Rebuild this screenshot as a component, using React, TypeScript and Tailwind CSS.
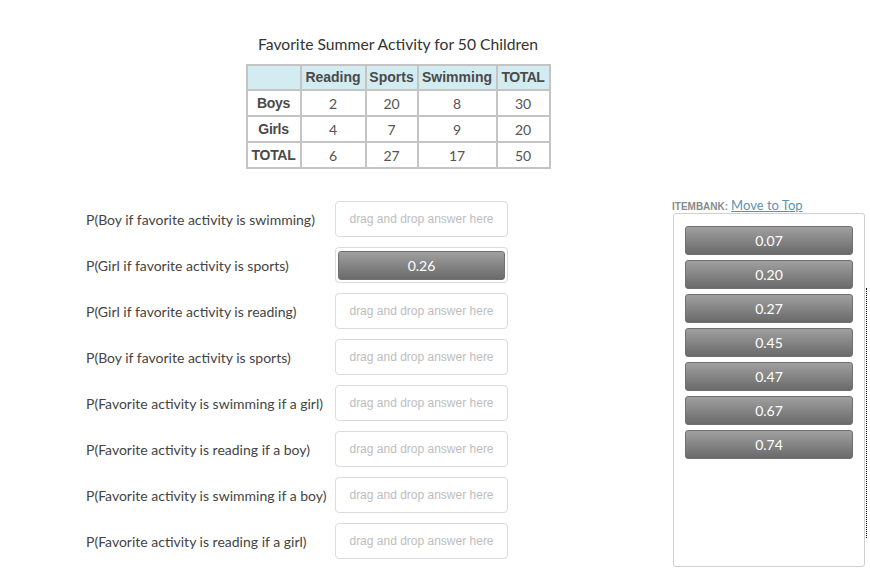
import React from 'react';

const rows = [
  { label: 'Boys', values: ['2', '20', '8', '30'] },
  { label: 'Girls', values: ['4', '7', '9', '20'] },
  { label: 'TOTAL', values: ['6', '27', '17', '50'] },
];

const questions = [
  { text: 'P(Boy if favorite activity is swimming)', answer: null },
  { text: 'P(Girl if favorite activity is sports)', answer: '0.26' },
  { text: 'P(Girl if favorite activity is reading)', answer: null },
  { text: 'P(Boy if favorite activity is sports)', answer: null },
  { text: 'P(Favorite activity is swimming if a girl)', answer: null },
  { text: 'P(Favorite activity is reading if a boy)', answer: null },
  { text: 'P(Favorite activity is swimming if a boy)', answer: null },
  { text: 'P(Favorite activity is reading if a girl)', answer: null },
];

const bank = ['0.07', '0.20', '0.27', '0.45', '0.47', '0.67', '0.74'];

function Tile({ value }: { value: string }) {
  return (
    <div className="h-[29px] rounded-[3px] border border-[#707070] bg-gradient-to-b from-[#a0a0a0] to-[#6a6a6a] flex items-center justify-center text-white text-[14px]">
      {value}
    </div>
  );
}

export default function App() {
  return (
    <div className="relative w-[870px] h-[573px] bg-white text-[#444] font-['Lato',sans-serif] overflow-hidden">
      <div className="w-[796px] pt-[34px] flex flex-col items-center">
        <h1 className="text-[15.7px] leading-[20px] text-[#333]">Favorite Summer Activity for 50 Children</h1>
        <table className="mt-[10px] border-collapse border-2 border-[#c4c4c4] text-[14px]">
          <thead>
            <tr className="bg-[#d3ecf1] h-[25px] font-['Liberation_Sans',sans-serif] font-bold text-[#4a4a4a]">
              <th className="w-[54px] p-0 border-2 border-[#c4c4c4]"></th>
              <th className="w-[65px] p-0 border-2 border-[#c4c4c4]">Reading</th>
              <th className="w-[52px] p-0 border-2 border-[#c4c4c4]">Sports</th>
              <th className="w-[79px] p-0 border-2 border-[#c4c4c4]">Swimming</th>
              <th className="w-[53px] p-0 border-2 border-[#c4c4c4] tracking-[-0.5px]">TOTAL</th>
            </tr>
          </thead>
          <tbody>
            {rows.map((r) => (
              <tr key={r.label} className="h-[26px]">
                <td className="p-0 border-2 border-[#c4c4c4] text-center font-['Liberation_Sans',sans-serif] font-bold text-[#4a4a4a] tracking-[-0.3px]">
                  {r.label}
                </td>
                {r.values.map((v, i) => (
                  <td key={i} className="p-0 border-2 border-[#c4c4c4] text-center text-[#555]">
                    {v}
                  </td>
                ))}
              </tr>
            ))}
          </tbody>
        </table>
      </div>

      <div className="mt-[27px] flex pl-[86px]">
        <div className="flex flex-col">
          {questions.map((q) => (
            <div key={q.text} className="h-[46px] flex items-center">
              <div className="w-[249px] text-[14px] text-[#444]">{q.text}</div>
              <div className="w-[173px] h-[36px] rounded-[4px] border border-[#dcdcdc] bg-white p-[2px] flex items-center justify-center">
                {q.answer ? (
                  <div className="w-full">
                    <Tile value={q.answer} />
                  </div>
                ) : (
                  <span className="font-['Liberation_Sans',sans-serif] text-[12px] text-[#bdbdbd]">drag and drop answer here</span>
                )}
              </div>
            </div>
          ))}
        </div>

        <div className="ml-[164px] flex flex-col">
          <div className="mt-[2px] h-[14px] leading-[14px] flex items-baseline gap-[3px]">
            <span className="font-['Liberation_Sans',sans-serif] font-bold text-[10px] text-[#8a8a8a]">ITEMBANK:</span>
            <span className="text-[13px] text-[#5b93b5] underline">Move to Top</span>
          </div>
          <div className="mt-[1px] ml-[1px] w-[192px] h-[354px] rounded-[3px] border border-[#cfcfcf] px-[11px] pt-[12px] flex flex-col gap-[5px]">
            {bank.map((b) => (
              <Tile key={b} value={b} />
            ))}
          </div>
        </div>
      </div>

      <div className="absolute left-[866px] top-[288px] h-[250px] border-l border-dotted border-black" />
    </div>
  );
}
